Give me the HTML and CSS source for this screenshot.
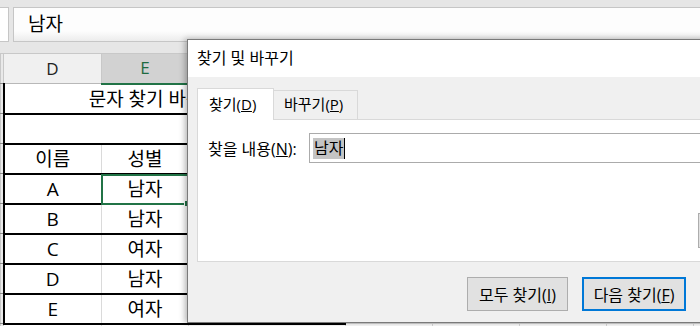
FILE: index.html
```html
<!DOCTYPE html>
<html lang="ko">
<head>
    <meta charset="utf-8">
    <title>찾기 및 바꾸기</title>
    <link rel="stylesheet" href="styles.css">
</head>
<body>
    <!-- Formula bar -->
    <div class="formula-row">
        <div class="name-box"></div>
        <div class="formula-box">남자</div>
    </div>

    <!-- Worksheet -->
    <table class="sheet">
        <colgroup>
            <col class="col-stub"><col class="col-d"><col class="col-e"><col class="col-f">
            <col class="col-n"><col class="col-n"><col class="col-n"><col class="col-n"><col class="col-n">
        </colgroup>
        <tr>
            <th class="stub"></th><th>D</th><th class="sel">E</th><th>F</th><th>G</th><th>H</th><th>I</th><th>J</th><th>K</th>
        </tr>
        <tr>
            <th class="stub"></th><td class="tb tl title" colspan="3">문자 찾기 바꾸기 예제</td><td></td><td></td><td></td><td></td><td></td>
        </tr>
        <tr>
            <th class="stub"></th><td class="tb tl" colspan="3"></td><td></td><td></td><td></td><td></td><td></td>
        </tr>
        <tr>
            <th class="stub"></th><td class="tb tl">이름</td><td class="tb">성별</td><td class="tb">비고</td><td></td><td></td><td></td><td></td><td></td>
        </tr>
        <tr>
            <th class="stub"></th><td class="tb tl">A</td><td class="tb active">남자</td><td class="tb"></td><td></td><td></td><td></td><td></td><td></td>
        </tr>
        <tr>
            <th class="stub"></th><td class="tb tl">B</td><td class="tb">남자</td><td class="tb"></td><td></td><td></td><td></td><td></td><td></td>
        </tr>
        <tr>
            <th class="stub"></th><td class="tb tl">C</td><td class="tb">여자</td><td class="tb"></td><td></td><td></td><td></td><td></td><td></td>
        </tr>
        <tr>
            <th class="stub"></th><td class="tb tl">D</td><td class="tb">남자</td><td class="tb"></td><td></td><td></td><td></td><td></td><td></td>
        </tr>
        <tr>
            <th class="stub"></th><td class="tb tl">E</td><td class="tb">여자</td><td class="tb"></td><td></td><td></td><td></td><td></td><td></td>
        </tr>
        <tr>
            <th class="stub"></th><td></td><td></td><td></td><td></td><td></td><td></td><td></td><td></td>
        </tr>
    </table>

    <!-- Find & Replace dialog -->
    <div class="dialog">
        <div class="dlg-title">찾기 및 바꾸기</div>
        <div class="dlg-body">
            <div class="tabs">
                <div class="tab active">찾기(<u>D</u>)</div>
                <div class="tab">바꾸기(<u>P</u>)</div>
            </div>
            <div class="panel">
                <div class="field">
                    <label>찾을 내용(<u>N</u>):</label>
                    <div class="input"><span class="selection">남자</span><span class="caret"></span></div>
                </div>
                <div class="panel-foot">
                    <button class="btn options">옵션(<u>T</u>) &gt;&gt;</button>
                </div>
            </div>
            <div class="actions">
                <button class="btn find-all">모두 찾기(<u>I</u>)</button>
                <button class="btn find-next default">다음 찾기(<u>F</u>)</button>
                <button class="btn close">닫기</button>
            </div>
        </div>
    </div>
</body>
</html>
```

FILE: styles.css
```css
* {
    box-sizing: border-box;
}

body {
    margin: 0;
    width: 700px;
    height: 326px;
    overflow: hidden;
    position: relative;
    background: #e6e6e6;
    color: #000;
    font-family: "Open Sans", "Noto Sans CJK KR", sans-serif;
}

/* formula bar */
.formula-row {
    display: flex;
    gap: 4px;
    padding-top: 7px;
    height: 42px;
    margin-bottom: 11px;
}

.name-box {
    width: 9px;
    background: #fff;
    border: 1px solid #c6c6c6;
    border-left: 0;
}

.formula-box {
    flex: 1;
    padding-left: 14px;
    background: linear-gradient(#fdfdfd 70%, #ececec);
    border: 1px solid #c6c6c6;
    border-right: 0;
    font-size: 19px;
    line-height: 32px;
}

/* worksheet */
.sheet {
    border-collapse: collapse;
    table-layout: fixed;
    width: 781px;
    background: #fff;
    font-size: 19px;
}

.col-stub { width: 3px; }
.col-d { width: 98px; }
.col-e { width: 87px; }
.col-f { width: 157px; }
.col-n { width: 87px; }

.sheet th {
    height: 30px;
    padding: 0;
    background: #f0f0f0;
    border: 1px solid #c8c8c8;
    border-bottom-color: #b8b8b8;
    font-weight: normal;
    font-size: 17px;
    line-height: 20px;
    color: #222;
}

.sheet th.sel {
    background: #d2d2d2;
    color: #1e6b41;
    border-bottom: 2px solid #217346;
}

.sheet th.stub {
    background: #e9e9e9;
    border-bottom-color: #8a8a8a;
}

.sheet td {
    height: 30px;
    padding: 0;
    border: 1px solid #dadada;
    text-align: center;
    line-height: 20px;
    white-space: nowrap;
}

.sheet td.tb {
    border-bottom: 2px solid #000;
}

.sheet td.tl {
    border-left: 2px solid #000;
}

.sheet td.active {
    position: relative;
}

.sheet td.active::after {
    content: "";
    position: absolute;
    inset: -1px -1px -2px -1px;
    border: 2px solid #217346;
}

.sheet td.active::before {
    content: "";
    position: absolute;
    right: -3px;
    bottom: -4px;
    width: 5px;
    height: 5px;
    background: #217346;
    border: 1px solid #fff;
    z-index: 1;
}

/* dialog */
.dialog {
    position: absolute;
    z-index: 5;
    left: 187px;
    top: 39px;
    width: 616px;
    height: 284px;
    background: #f0f0f0;
    border: 1px solid #7a7a7a;
    box-shadow: -2px 0 6px rgba(0, 0, 0, 0.3);
    font-size: 16px;
}

.dlg-title {
    height: 37px;
    padding-left: 9px;
    background: #fff;
    line-height: 37px;
}

.dlg-body {
    padding: 11px 12px 11px 9px;
}

.tabs {
    display: flex;
    align-items: flex-end;
    height: 31px;
}

.tab {
    width: 84px;
    height: 29px;
    padding-left: 10px;
    border: 1px solid #d9d9d9;
    border-bottom: 0;
    line-height: 27px;
    font-size: 15px;
}

.tab + .tab {
    border-left: 0;
}

.tab.active {
    position: relative;
    z-index: 1;
    width: 77px;
    height: 32px;
    margin-bottom: -1px;
    padding-left: 11px;
    background: #fff;
    line-height: 30px;
}

.panel {
    height: 143px;
    padding: 13px 4px 0 10px;
    background: #fff;
    border: 1px solid #d9d9d9;
}

.field {
    display: flex;
    align-items: center;
    padding-right: 4px;
}

.field label {
    width: 101px;
}

.input {
    flex: 1;
    display: flex;
    align-items: center;
    height: 30px;
    padding-left: 3px;
    border: 1px solid #ababab;
    font-size: 16px;
}

.selection {
    background: #c4c4c4;
    line-height: 21px;
    padding: 0 1px;
}

.caret {
    width: 1px;
    height: 21px;
    background: #000;
}

.panel-foot {
    display: flex;
    justify-content: flex-end;
    margin-top: 50px;
}

.btn {
    height: 34px;
    padding: 0;
    background: #e1e1e1;
    border: 1px solid #adadad;
    font-family: inherit;
    font-size: 16px;
    color: #000;
}

.btn.options {
    width: 87px;
    height: 35px;
}

.actions {
    display: flex;
    justify-content: flex-end;
    gap: 14px;
    margin-top: 15px;
}

.find-all { width: 101px; }
.find-next { width: 104px; }
.close { width: 90px; }

.btn.default {
    border: 2px solid #0078d7;
}
```
